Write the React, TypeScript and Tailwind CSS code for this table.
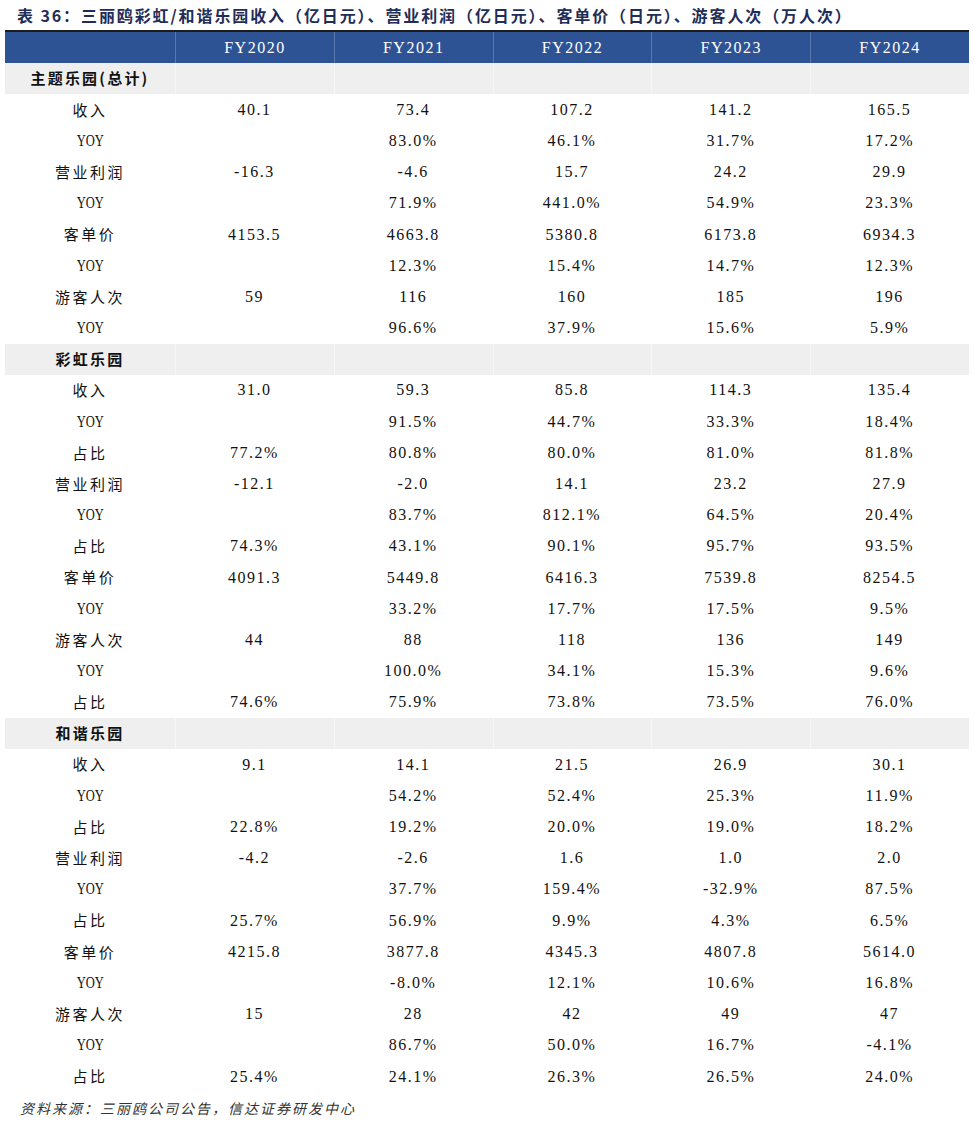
import React from "react";

type Row = { label: string; values: string[]; section?: boolean };

const years = ["FY2020", "FY2021", "FY2022", "FY2023", "FY2024"];

const rows: Row[] = [
  { label: "主题乐园(总计)", values: [], section: true },
  { label: "收入", values: ["40.1", "73.4", "107.2", "141.2", "165.5"] },
  { label: "YOY", values: ["", "83.0%", "46.1%", "31.7%", "17.2%"] },
  { label: "营业利润", values: ["-16.3", "-4.6", "15.7", "24.2", "29.9"] },
  { label: "YOY", values: ["", "71.9%", "441.0%", "54.9%", "23.3%"] },
  { label: "客单价", values: ["4153.5", "4663.8", "5380.8", "6173.8", "6934.3"] },
  { label: "YOY", values: ["", "12.3%", "15.4%", "14.7%", "12.3%"] },
  { label: "游客人次", values: ["59", "116", "160", "185", "196"] },
  { label: "YOY", values: ["", "96.6%", "37.9%", "15.6%", "5.9%"] },
  { label: "彩虹乐园", values: [], section: true },
  { label: "收入", values: ["31.0", "59.3", "85.8", "114.3", "135.4"] },
  { label: "YOY", values: ["", "91.5%", "44.7%", "33.3%", "18.4%"] },
  { label: "占比", values: ["77.2%", "80.8%", "80.0%", "81.0%", "81.8%"] },
  { label: "营业利润", values: ["-12.1", "-2.0", "14.1", "23.2", "27.9"] },
  { label: "YOY", values: ["", "83.7%", "812.1%", "64.5%", "20.4%"] },
  { label: "占比", values: ["74.3%", "43.1%", "90.1%", "95.7%", "93.5%"] },
  { label: "客单价", values: ["4091.3", "5449.8", "6416.3", "7539.8", "8254.5"] },
  { label: "YOY", values: ["", "33.2%", "17.7%", "17.5%", "9.5%"] },
  { label: "游客人次", values: ["44", "88", "118", "136", "149"] },
  { label: "YOY", values: ["", "100.0%", "34.1%", "15.3%", "9.6%"] },
  { label: "占比", values: ["74.6%", "75.9%", "73.8%", "73.5%", "76.0%"] },
  { label: "和谐乐园", values: [], section: true },
  { label: "收入", values: ["9.1", "14.1", "21.5", "26.9", "30.1"] },
  { label: "YOY", values: ["", "54.2%", "52.4%", "25.3%", "11.9%"] },
  { label: "占比", values: ["22.8%", "19.2%", "20.0%", "19.0%", "18.2%"] },
  { label: "营业利润", values: ["-4.2", "-2.6", "1.6", "1.0", "2.0"] },
  { label: "YOY", values: ["", "37.7%", "159.4%", "-32.9%", "87.5%"] },
  { label: "占比", values: ["25.7%", "56.9%", "9.9%", "4.3%", "6.5%"] },
  { label: "客单价", values: ["4215.8", "3877.8", "4345.3", "4807.8", "5614.0"] },
  { label: "YOY", values: ["", "-8.0%", "12.1%", "10.6%", "16.8%"] },
  { label: "游客人次", values: ["15", "28", "42", "49", "47"] },
  { label: "YOY", values: ["", "86.7%", "50.0%", "16.7%", "-4.1%"] },
  { label: "占比", values: ["25.4%", "24.1%", "26.3%", "26.5%", "24.0%"] },
];

const serif = "font-['Liberation_Serif','Noto_Sans_CJK_SC',serif]";
const cjk = "font-['Noto_Sans_CJK_SC',sans-serif]";

export default function App() {
  return (
    <div className="w-[975px] h-[1121px] bg-white relative text-[#111]">
      <div className={`${cjk} pl-[17px] h-[30px] flex items-center text-[16px] font-bold tracking-[1.9px] text-[#1f2d57]`}>
        表 36：三丽鸥彩虹/和谐乐园收入（亿日元）、营业利润（亿日元）、客单价（日元）、游客人次（万人次）
      </div>

      <div className="ml-[5px] w-[964px]">
        {/* header */}
        <div className="grid grid-cols-[170px_repeat(5,1fr)] h-[33px] bg-[#2e5395] border-t-[2px] border-[#1c1c1c]">
          <div />
          {years.map((y) => (
            <div
              key={y}
              className={`${serif} border-l border-[#5a78ae] flex items-center justify-center text-white text-[16px] tracking-[1.5px]`}
            >
              {y}
            </div>
          ))}
        </div>

        {rows.map((r, i) =>
          r.section ? (
            <div key={i} className="grid grid-cols-[170px_repeat(5,1fr)] h-[31.2px] bg-[#efefef]">
              <div className={`${cjk} flex items-center justify-center font-bold text-[15px] tracking-[2.2px]`}>
                {r.label}
              </div>
              {years.map((y) => (
                <div key={y} className="border-l border-[#f6f6f6]" />
              ))}
            </div>
          ) : (
            <div key={i} className="grid grid-cols-[170px_repeat(5,1fr)] h-[31.2px]">
              {r.label === "YOY" ? (
                <div className={`${serif} flex items-center justify-center text-[16px]`}>
                  <span className="inline-block scale-x-[0.78]">{r.label}</span>
                </div>
              ) : (
                <div className={`${cjk} flex items-center justify-center text-[15px] tracking-[2.5px]`}>
                  {r.label}
                </div>
              )}
              {r.values.map((v, j) => (
                <div
                  key={j}
                  className={`${serif} flex items-center justify-center text-[16px] tracking-[1.5px]`}
                >
                  {v}
                </div>
              ))}
            </div>
          )
        )}
      </div>

      <div className={`${cjk} pl-[20px] mt-[6px] italic text-[14px] tracking-[2px] text-[#333]`}>
        资料来源：三丽鸥公司公告，信达证券研发中心
      </div>
    </div>
  );
}
